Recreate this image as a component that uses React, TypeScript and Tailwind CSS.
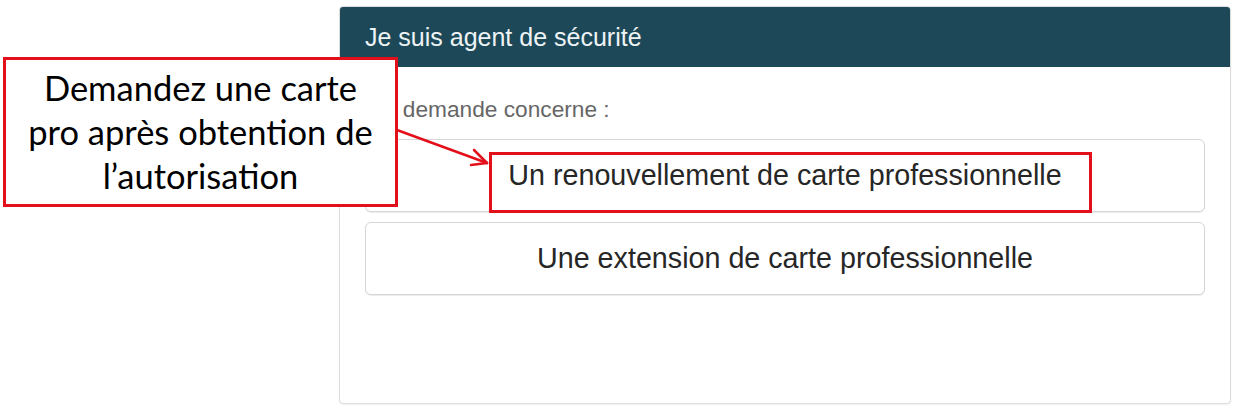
import React from 'react';

const choices = [
  'Un renouvellement de carte professionnelle',
  'Une extension de carte professionnelle',
];

const App: React.FC = () => {
  return (
    <div className="relative w-[1250px] h-[414px] bg-white overflow-hidden">
      {/* Request panel */}
      <div className="ml-[339px] pt-[6px]">
        <div className="w-[892px] h-[398px] flex flex-col border border-[#dcdcdc] rounded-[4px] bg-white shadow-[0_1px_2px_rgba(0,0,0,0.06)] overflow-hidden font-['Liberation_Sans',Arial,sans-serif]">
          <div className="h-[60px] shrink-0 flex items-center px-[25px] bg-[#1c4858] text-[#eef3f5] text-[25px] leading-none">
            Je suis agent de sécurité
          </div>
          <div className="flex flex-col px-[25px] pt-[30px]">
            <p className="text-[#666] text-[22.7px] leading-[24px]">Ma demande concerne :</p>
            <div className="flex flex-col gap-[10px] mt-[18px]">
              {choices.map((label) => (
                <button
                  key={label}
                  className="h-[73px] w-full flex items-center justify-center rounded-[6px] border border-[#d6d6d6] bg-white shadow-[0_1px_1px_rgba(0,0,0,0.08)] text-[#262626] text-[28.7px] leading-none"
                >
                  {label}
                </button>
              ))}
            </div>
          </div>
        </div>
      </div>

      {/* Callout annotation */}
      <div className="absolute left-[3px] top-[57px] w-[395px] h-[150px] flex items-center justify-center border-[3px] border-[#e3101b] bg-white text-black text-center text-[34.5px] leading-[44px] font-['Lato',sans-serif]">
        <span className="whitespace-nowrap">
          Demandez une carte
          <br />
          pro après obtention de
          <br />
          l’autorisation
        </span>
      </div>

      {/* Highlight around the first choice */}
      <div className="absolute left-[489px] top-[152px] w-[603px] h-[61px] border-[3px] border-[#e3101b]" />

      {/* Pointer arrow */}
      <svg className="absolute left-0 top-0 pointer-events-none" width="1250" height="414" viewBox="0 0 1250 414">
        <g stroke="#e3101b" strokeWidth="2.5" fill="none" strokeLinecap="round">
          <line x1="397" y1="130" x2="487" y2="163" />
          <line x1="487" y1="163" x2="474" y2="150" />
          <line x1="487" y1="163" x2="471" y2="165" />
        </g>
      </svg>
    </div>
  );
};

export default App;
